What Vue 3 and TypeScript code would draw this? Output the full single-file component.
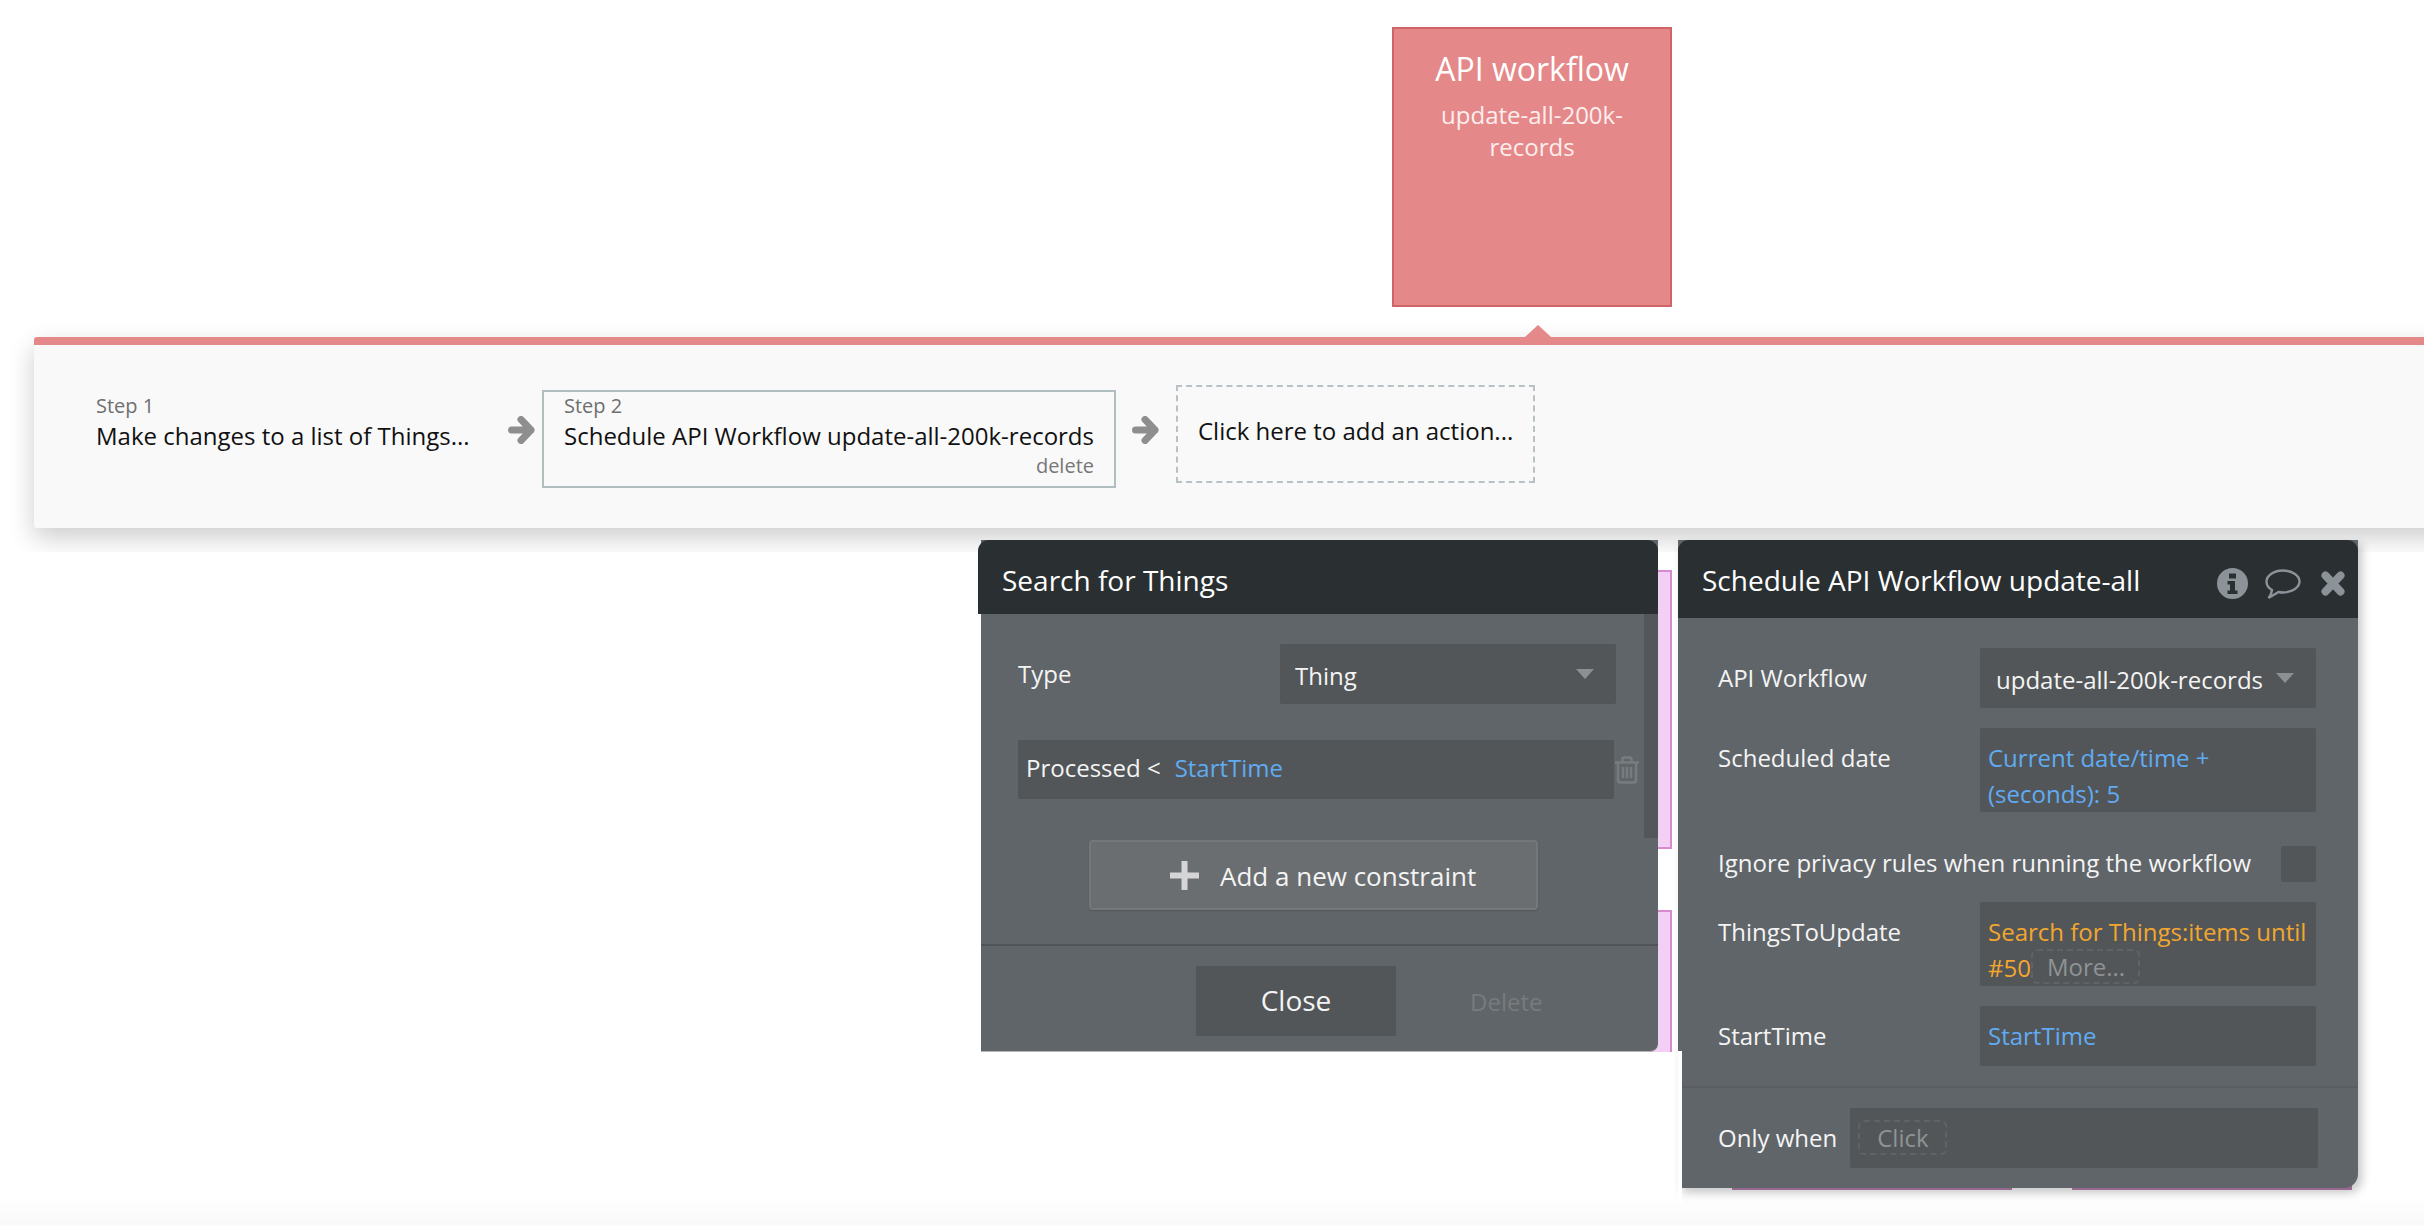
<script setup lang="ts">
const pinkNodes = ['pink-a', 'pink-b']
const stubs = ['stub-a', 'stub-b']
</script>

<template>
  <div class="page">
    <section class="node-api">
      <div class="node-title">API workflow</div>
      <div class="node-sub">update-all-200k-<br />records</div>
    </section>

    <div v-for="p in pinkNodes" :key="p" class="pink" :class="p"></div>
    <div v-for="s in stubs" :key="s" class="stub" :class="s"></div>

    <div class="bar-clip">
      <div class="bar">
        <span class="bar-tip"></span>
        <div class="step step-plain">
          <div class="step-label">Step 1</div>
          <div class="step-text">Make changes to a list of Things...</div>
        </div>
        <svg class="arrow" viewBox="0 0 27 28"><path d="M3.5 14H23M13 3.500l10 10.500-10 10.500" /></svg>
        <div class="step step-active">
          <div class="step-label">Step 2</div>
          <div class="step-text">Schedule API Workflow update-all-200k-records</div>
          <div class="step-delete">delete</div>
        </div>
        <svg class="arrow" viewBox="0 0 27 28"><path d="M3.5 14H23M13 3.500l10 10.500-10 10.500" /></svg>
        <div class="step-add">Click here to add an action...</div>
      </div>
    </div>

    <section class="window win-search">
      <header class="win-head search-head">Search for Things</header>
      <div class="scrollbar"></div>
      <div class="search-body">
        <div class="search-row">
          <span class="label">Type</span>
          <div class="field select search-select"><span>Thing</span><i class="caret"></i></div>
        </div>
        <div class="constraint-row">
          <div class="field constraint">Processed &lt;<span class="blue constraint-val">StartTime</span></div>
          <svg class="trash" viewBox="0 0 26 28" fill="none">
            <path d="M1 6.500h24M8.500 6V3.500Q8.500 1.500 10.500 1.500h5q2 0 2 2V6M4 7v17q0 2.500 2.500 2.500h13Q22 26.500 22 24V7M9 11v11M13 11v11M17 11v11" />
          </svg>
        </div>
        <button class="add-btn">
          <svg class="plus" viewBox="0 0 29 29"><path d="M11.500 0h6v11.500H29v6H17.500V29h-6V17.500H0v-6h11.500z" /></svg>
          <span>Add a new constraint</span>
        </button>
      </div>
      <footer class="search-foot">
        <button class="close-btn">Close</button>
        <span class="delete-link">Delete</span>
      </footer>
    </section>

    <section class="window win-sched">
      <header class="win-head sched-head">
        <span class="sched-title">Schedule API Workflow update-all</span>
        <svg class="ic ic-info" viewBox="0 0 31 31">
          <path fill-rule="evenodd" d="M15.500 0a15.500 15.500 0 1 1 0 31a15.500 15.500 0 0 1 0-31zM12 5.500v5h7v-5zM10.500 13v3.500H13v6h-2.500V26h10v-3.500H18V13z" />
        </svg>
        <svg class="ic ic-bubble" viewBox="0 0 36 31" fill="none">
          <path d="M18 1.500C27 1.500 34.500 6.500 34.500 12.500S27 23.500 18 23.500Q15.500 23.500 13.500 23L3.500 29Q6.500 25.500 7 21C3.500 19 1.500 16 1.500 12.500C1.500 6.500 9 1.500 18 1.500z" />
        </svg>
        <svg class="ic ic-x" viewBox="0 0 24 25"><path d="M4.500 4.500l15 16M19.500 4.500l-15 16" /></svg>
      </header>

      <div class="sched-body">
        <div class="form-row">
          <span class="label">API Workflow</span>
          <div class="field select sched-select"><span>update-all-200k-records</span><i class="caret"></i></div>
        </div>
        <div class="form-row top">
          <span class="label">Scheduled date</span>
          <div class="field multi blue">Current date/time +<br />(seconds): 5</div>
        </div>
        <div class="form-row check-row">
          <span class="label">Ignore privacy rules when running the workflow</span>
          <div class="checkbox"></div>
        </div>
        <div class="form-row top">
          <span class="label">ThingsToUpdate</span>
          <div class="field multi orange">
            Search for Things:items until<br />#50<span class="chip chip-more">More...</span>
          </div>
        </div>
        <div class="form-row">
          <span class="label">StartTime</span>
          <div class="field single blue">StartTime</div>
        </div>
      </div>

      <div class="sched-only">
        <span class="label">Only when</span>
        <div class="field only-field"><span class="chip chip-click">Click</span></div>
      </div>
      <div class="notch"></div>
    </section>
  </div>
</template>

<style scoped>
.page {
  position: relative;
  width: 2424px;
  height: 1226px;
  overflow: hidden;
  font-family: "Open Sans", "Noto Sans", sans-serif;
  background: linear-gradient(to bottom, #fff 1195px, #f9f9f9 1226px);
}

.node-api {
  position: absolute;
  left: 1392px;
  top: 27px;
  width: 280px;
  height: 280px;
  box-sizing: border-box;
  z-index: 2;
  padding-top: 18px;
  background: #e58889;
  border: 2px solid #cf6468;
  color: #fff;
  text-align: center;
}
.node-title {
  font-size: 32px;
  line-height: 44px;
}
.node-sub {
  margin-top: 8px;
  font-size: 24px;
  line-height: 32px;
  color: #fdeeee;
}

.bar-clip {
  position: absolute;
  top: 290px;
  left: 0;
  right: 0;
  height: 262px;
  overflow: hidden;
  padding: 47px 0 0 34px;
  box-sizing: border-box;
  z-index: 1;
}
.bar {
  position: relative;
  height: 191px;
  margin-right: -60px;
  box-sizing: border-box;
  display: flex;
  align-items: flex-start;
  padding: 8px 0 0 62px;
  background: #f9f9f9;
  border-top: 8px solid #e58889;
  border-radius: 3px 0 0 3px;
  box-shadow: 0 10px 26px rgba(0, 0, 0, 0.2);
}
.bar-tip {
  position: absolute;
  left: 1491px;
  top: -20px;
  width: 0;
  height: 0;
  border-left: 13px solid transparent;
  border-right: 13px solid transparent;
  border-bottom: 12px solid #e58889;
}
.step-label {
  font-size: 20px;
  line-height: 26px;
  color: #6f6f6f;
}
.step-text {
  font-size: 24px;
  line-height: 34px;
  color: #111;
  white-space: nowrap;
}
.step-plain {
  width: 412px;
  padding-top: 40px;
}
.step-active {
  width: 574px;
  height: 98px;
  box-sizing: border-box;
  margin-top: 37px;
  margin-left: 7px;
  padding: 1px 20px 0;
  border: 2px solid #b0bec0;
}
.step-delete {
  font-size: 20px;
  line-height: 26px;
  color: #777;
  text-align: right;
}
.arrow {
  width: 27px;
  height: 28px;
  margin-top: 63px;
  fill: none;
  stroke: #8e8e8e;
  stroke-width: 7;
  stroke-linecap: round;
  stroke-linejoin: round;
  flex: none;
}
.step-active + .arrow {
  margin-left: 16px;
}
.step-add {
  width: 359px;
  height: 98px;
  margin-top: 32px;
  margin-left: 17px;
  box-sizing: border-box;
  padding: 27px 0 0 20px;
  border: 2px dashed #b8c2c6;
  font-size: 24px;
  line-height: 34px;
  color: #111;
  white-space: nowrap;
}

.pink {
  position: absolute;
  left: 1650px;
  width: 22px;
  box-sizing: border-box;
  background: #f2d0f5;
  border: 2px solid #d88ad0;
  border-left: 0;
}
.pink-a {
  top: 570px;
  height: 279px;
}
.pink-b {
  top: 910px;
  height: 142px;
  border-bottom: 0;
}
.stub {
  position: absolute;
  top: 1180px;
  height: 10px;
  background: #b87fb0;
}
.stub-a {
  left: 1732px;
  width: 280px;
}
.stub-b {
  left: 2072px;
  width: 280px;
}

.window {
  position: absolute;
  z-index: 3;
  top: 540px;
  color: #fff;
}
.win-head {
  box-sizing: border-box;
  background: #2a3032;
  border-radius: 11px 11px 0 0;
  color: #fff;
  font-size: 28px;
}
.label {
  font-size: 24px;
  line-height: 36px;
  color: #f4f4f4;
  white-space: nowrap;
}
.field {
  box-sizing: border-box;
  background: #525659;
  border-radius: 2px;
  font-size: 24px;
  line-height: 36px;
  color: #f4f4f4;
}
.select {
  height: 60px;
  display: flex;
  align-items: center;
  justify-content: space-between;
}
.select span {
  padding-top: 3px;
  white-space: nowrap;
}
.caret {
  width: 0;
  height: 0;
  border-left: 9px solid transparent;
  border-right: 9px solid transparent;
  border-top: 10px solid #8b9093;
}
.blue {
  color: #60abf2;
}
.orange {
  color: #f2a62e;
}

.win-search {
  left: 981px;
  width: 677px;
  height: 511px;
  background: #606569;
  border-radius: 0 0 8px 0;
  border-bottom: 1px solid #b5b5b5;
  box-sizing: content-box;
}
.search-head {
  margin-left: -3px;
  height: 74px;
  line-height: 81px;
  padding-left: 24px;
}
.scrollbar {
  position: absolute;
  right: 0;
  top: 74px;
  width: 14px;
  height: 224px;
  background: #53575a;
}
.search-body {
  height: 332px;
  box-sizing: border-box;
  padding: 30px 0 0 37px;
  border-bottom: 2px solid #505456;
}
.search-row {
  display: flex;
  align-items: center;
  height: 60px;
}
.search-row .label {
  width: 262px;
  margin-top: -1px;
}
.search-select {
  width: 336px;
  padding: 0 22px 0 15px;
}
.constraint-row {
  display: flex;
  align-items: center;
  margin-top: 36px;
}
.constraint {
  width: 596px;
  height: 59px;
  padding: 10px 0 0 8px;
}
.constraint-val {
  margin-left: 14px;
}
.trash {
  width: 26px;
  height: 28px;
  margin-top: 1px;
  stroke: #777c7f;
  stroke-width: 2.5;
  flex: none;
}
.add-btn {
  display: flex;
  align-items: center;
  gap: 21px;
  width: 449px;
  height: 70px;
  box-sizing: border-box;
  margin: 41px 0 0 71px;
  padding: 0 0 0 79px;
  background: #6a6e71;
  border: 2px solid #74787b;
  border-radius: 4px;
  box-shadow: 0 1px 2px rgba(0, 0, 0, 0.15);
  color: #f4f4f4;
  font: inherit;
  font-size: 26px;
}
.add-btn span {
  padding-top: 2px;
}
.plus {
  width: 29px;
  height: 29px;
  fill: #d5d5d5;
  flex: none;
}
.search-foot {
  display: flex;
  align-items: center;
  gap: 74px;
  padding: 20px 0 0 215px;
}
.close-btn {
  width: 200px;
  height: 70px;
  padding: 0 0 2px;
  background: #525659;
  border: 0;
  color: #f4f4f4;
  font: inherit;
  font-size: 28px;
}
.delete-link {
  font-size: 24px;
  color: #777b7e;
}

.win-sched {
  left: 1678px;
  width: 680px;
  height: 648px;
  background: #606569;
  border-radius: 0 0 14px 0;
  box-shadow: 4px 5px 10px rgba(0, 0, 0, 0.22);
}
.sched-head {
  display: flex;
  align-items: center;
  height: 78px;
  padding: 0 13px 0 24px;
}
.sched-title {
  flex: 1;
  padding-top: 2px;
  white-space: nowrap;
}
.ic {
  flex: none;
}
.ic-info {
  width: 31px;
  height: 31px;
  fill: #8b9399;
  margin-top: 8px;
}
.ic-bubble {
  width: 36px;
  height: 31px;
  margin: 10px 0 0 17px;
  stroke: #8b9399;
  stroke-width: 2.4;
}
.ic-x {
  width: 24px;
  height: 25px;
  margin: 8px 0 0 20px;
  fill: none;
  stroke: #8b9399;
  stroke-width: 8;
  stroke-linecap: round;
}
.sched-body {
  height: 470px;
  box-sizing: border-box;
  padding: 30px 42px 0 40px;
  border-bottom: 2px solid #5a5e62;
}
.form-row {
  display: flex;
  justify-content: space-between;
  align-items: center;
  margin-bottom: 20px;
}
.form-row.top {
  align-items: flex-start;
}
.form-row.top .label {
  padding-top: 12px;
}
.sched-select {
  width: 336px;
  padding: 0 22px 0 16px;
}
.multi {
  width: 336px;
  height: 84px;
  padding: 12px 0 0 8px;
  white-space: nowrap;
}
.single {
  width: 336px;
  height: 60px;
  padding: 12px 0 0 8px;
}
.check-row {
  margin-top: 34px;
}
.check-row .label {
  margin-top: -2px;
}
.checkbox {
  width: 35px;
  height: 36px;
  background: #525659;
  border-radius: 2px;
}
.chip {
  display: inline-block;
  box-sizing: border-box;
  height: 35px;
  line-height: 31px;
  border: 2px dashed #5f6366;
  border-radius: 6px;
  color: #8f9394;
}
.chip-more {
  width: 109px;
  margin-left: 0;
  padding-left: 14px;
  vertical-align: top;
  margin-top: -1px;
}
.sched-only {
  display: flex;
  align-items: center;
  padding: 20px 0 0 40px;
}
.only-field {
  width: 468px;
  height: 60px;
  margin-left: 13px;
  padding: 12px 0 0 8px;
}
.chip-click {
  width: 89px;
  padding-left: 17px;
  display: block;
}
.notch {
  position: absolute;
  left: 0;
  top: 511px;
  bottom: -16px;
  width: 4px;
  background: #fff;
}
</style>

<style>
html,
body {
  margin: 0;
  background: #fff;
}
</style>
